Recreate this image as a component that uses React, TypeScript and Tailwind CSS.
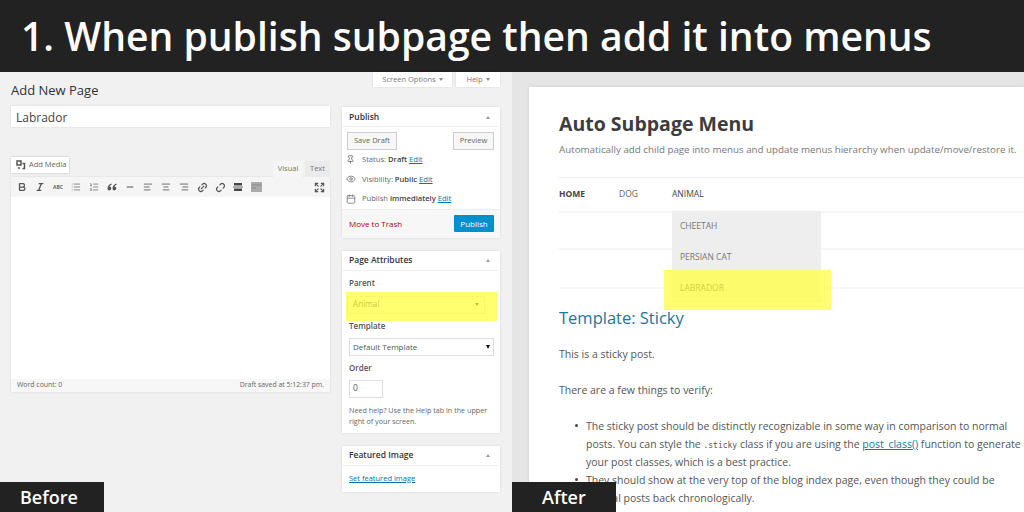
// Before/after promo banner: WordPress editor on the left, resulting site menu on the right.
import { AlignCenter, AlignLeft, AlignRight, Bold, Calendar, Expand, Eye, Italic, Link2, List, ListOrdered, Minus, Pin, Unlink2 } from 'lucide-react';
import type { ReactNode } from 'react';

const SANS = "font-['Open_Sans',sans-serif]";

function MetaBox({ title, children, className }: { title: string; children: ReactNode; className?: string }) {
  return (
    <section className={`w-full bg-white shadow-[0_0_2px_rgba(0,0,0,0.12)] ${className ?? ''}`}>
      <header className="flex h-5 items-center justify-between border-b border-[#f1f1f1] px-[7px] pt-px text-[8.5px] font-semibold text-[#333]">
        <span>{title}</span>
        <span className="mr-[3px] h-0 w-0 border-x-[2.5px] border-b-[3px] border-x-transparent border-b-[#999]" />
      </header>
      {children}
    </section>
  );
}

function StatusRow({ icon, children }: { icon: ReactNode; children: ReactNode }) {
  return (
    <div className="flex h-[19.5px] items-center gap-[5px] text-[7.6px] text-[#666]">
      <span className="flex w-[13px] justify-center text-[#777]">{icon}</span>
      <span>{children}</span>
    </div>
  );
}

function EditLink() {
  return (
    <>
      {' '}
      <span className="text-[#0073aa] underline">Edit</span>
    </>
  );
}

function Slot({ children }: { children: ReactNode }) {
  return <span className="flex w-[18px] justify-center">{children}</span>;
}

function Toolbar() {
  const c = 'text-[#555]';
  return (
    <div className="flex h-5 items-center bg-[#f5f5f5] pl-[2px] pr-[4px]">
      <Slot><Bold size={10} strokeWidth={3} className={c} /></Slot>
      <Slot><Italic size={10} strokeWidth={3} className={c} /></Slot>
      <Slot><span className="text-[5px] font-bold leading-none text-[#666]">ABC</span></Slot>
      <Slot><List size={10} strokeWidth={2} className="text-[#777]" /></Slot>
      <Slot><ListOrdered size={10} strokeWidth={2} className="text-[#777]" /></Slot>
      <Slot>
        <svg width="10" height="8" viewBox="0 0 10 8" className={c}>
          <path d="M4.500 0.500C2 1.500 0.500 3 0.500 5.500a1.900 1.900 0 1 0 2-1.900c.3-1 1-1.700 2.300-2.200zM9.500 0.500C7 1.500 5.500 3 5.500 5.500a1.900 1.900 0 1 0 2-1.900c.3-1 1-1.700 2.300-2.200z" fill="currentColor" />
        </svg>
      </Slot>
      <Slot><Minus size={10} strokeWidth={2.5} className={c} /></Slot>
      <Slot><AlignLeft size={10} strokeWidth={2} className={c} /></Slot>
      <Slot><AlignCenter size={10} strokeWidth={2} className={c} /></Slot>
      <Slot><AlignRight size={10} strokeWidth={2} className={c} /></Slot>
      <Slot><Link2 size={11} strokeWidth={2.5} className={`-rotate-45 ${c}`} /></Slot>
      <Slot><Unlink2 size={11} strokeWidth={2.5} className={`-rotate-45 ${c}`} /></Slot>
      <Slot>
        <svg width="10" height="10" viewBox="0 0 10 10" className="text-[#444]">
          <path d="M1 1h8v2.500H1zM1 6.500h8V9H1z" fill="currentColor" />
          <path d="M0 5h10" stroke="currentColor" strokeWidth="0.8" />
        </svg>
      </Slot>
      <Slot>
        <svg width="11" height="10" viewBox="0 0 11 10">
          <rect width="11" height="10" fill="#aaa" />
          <path d="M1 3h9M1 6h4" stroke="#888" />
        </svg>
      </Slot>
      <Expand size={11} strokeWidth={2.5} className={`ml-auto mr-[1px] ${c}`} />
    </div>
  );
}

function EditorColumn() {
  return (
    <div className="w-[319px]">
      <h1 className="flex h-[34px] items-center pt-[4px] text-[13px] text-[#333]">Add New Page</h1>
      <div className="flex h-[21px] items-center bg-white pl-[5px] pt-[2px] text-[12px] text-[#444] shadow-[0_0_2px_rgba(0,0,0,0.12)]">
        Labrador
      </div>
      <div className="mt-[30px] flex h-5 items-start justify-between">
        <div className="flex h-4 w-[58px] items-center gap-[3px] bg-white pl-[5px] text-[7.5px] text-[#666] shadow-[0_0_2px_rgba(0,0,0,0.25)]">
          <svg width="10" height="10" viewBox="0 0 10 10" className="text-[#555]">
            <path d="M1 1h4v4H1zM6.500 3.500h2v5h-2" fill="none" stroke="currentColor" strokeWidth="1.500" />
            <circle cx="3" cy="8" r="1" fill="currentColor" />
          </svg>
          Add Media
        </div>
        <div className="mt-1 flex h-4 items-center text-[7.5px] text-[#777]">
          <span className="flex h-4 w-[30px] items-center justify-center bg-[#f5f5f5]">Visual</span>
          <span className="ml-[2px] flex h-4 w-[25px] items-center justify-center bg-[#ebebeb]">Text</span>
        </div>
      </div>
      <div className="shadow-[0_0_2px_rgba(0,0,0,0.12)]">
        <Toolbar />
        <div className="h-[182px] bg-white" />
        <div className="flex h-[13px] items-center justify-between bg-[#f7f7f7] px-[6px] text-[6.9px] text-[#666]">
          <span>Word count: 0</span>
          <span>Draft saved at 5:12:37 pm.</span>
        </div>
      </div>
    </div>
  );
}

function SideColumn() {
  return (
    <div className="flex w-[158px] flex-col">
      <div className="flex h-[15px] justify-end gap-1">
        <div className="flex w-[79px] items-center justify-center gap-[3px] bg-white text-[7.5px] text-[#777] shadow-[0_0_2px_rgba(0,0,0,0.12)]">
          Screen Options
          <span className="h-0 w-0 border-x-[2px] border-t-[3px] border-x-transparent border-t-[#888]" />
        </div>
        <div className="flex w-[44px] items-center justify-center gap-[3px] bg-white text-[7.5px] text-[#777] shadow-[0_0_2px_rgba(0,0,0,0.12)]">
          Help
          <span className="h-0 w-0 border-x-[2px] border-t-[3px] border-x-transparent border-t-[#888]" />
        </div>
      </div>

      <MetaBox title="Publish" className="mt-5">
        <div className="flex justify-between px-[6px] pt-[6px]">
          <span className="flex h-4 w-12 items-center justify-center bg-[#f7f7f7] text-[7.5px] text-[#666] shadow-[0_0_0_1px_#ccc]">Save Draft</span>
          <span className="mr-[1px] flex h-4 w-[39px] items-center justify-center bg-[#f7f7f7] text-[7.5px] text-[#666] shadow-[0_0_0_1px_#ccc]">Preview</span>
        </div>
        <div className="px-[2px] pt-[1px]">
          <StatusRow icon={<Pin size={9} strokeWidth={2.5} />}>
            Status: <b className="font-semibold text-[#444]">Draft</b>
            <EditLink />
          </StatusRow>
          <StatusRow icon={<Eye size={10} strokeWidth={2} />}>
            Visibility: <b className="font-semibold text-[#444]">Public</b>
            <EditLink />
          </StatusRow>
          <StatusRow icon={<Calendar size={10} strokeWidth={2} />}>
            Publish <b className="font-semibold text-[#444]">immediately</b>
            <EditLink />
          </StatusRow>
        </div>
        <div className="flex h-[29px] items-center justify-between border-t border-[#eee] bg-[#f7f7f7] pl-[7px] pr-[6px]">
          <span className="text-[8px] text-[#a00]">Move to Trash</span>
          <span className="flex h-[17px] w-10 items-center justify-center rounded-[1px] bg-[#0091cd] text-[8px] text-white">Publish</span>
        </div>
      </MetaBox>

      <MetaBox title="Page Attributes" className="mt-[13px]">
        <div className="px-[7px] text-[8px]">
          <p className="pt-[6px] font-semibold leading-[12px] text-[#555]">Parent</p>
          <div className="-ml-[1px] mt-[8px] flex h-4 w-[136px] items-center justify-between bg-white pl-[5px] pr-[5px] text-[8.2px] text-[#222] shadow-[0_0_0_1px_#ddd]">
            Animal
            <span className="h-0 w-0 border-x-[2px] border-t-[3px] border-x-transparent border-t-black" />
          </div>
          <p className="mt-[7px] font-semibold leading-[12px] text-[#555]">Template</p>
          <div className="ml-[1px] mt-[7px] flex h-4 w-[143px] items-center justify-between bg-white pl-[3px] pr-[3px] text-[8px] text-[#555] shadow-[0_0_0_1px_#ddd]">
            Default Template
            <span className="h-0 w-0 border-x-[2.5px] border-t-[4px] border-x-transparent border-t-[#111]" />
          </div>
          <p className="mt-[7px] font-semibold leading-[12px] text-[#555]">Order</p>
          <div className="ml-[1px] mt-[7px] flex h-4 w-8 items-center bg-white pl-[3px] text-[8.5px] text-[#555] shadow-[0_0_0_1px_#ddd]">0</div>
          <p className="whitespace-nowrap pb-[6px] pt-[8px] text-[7.2px] leading-[11px] text-[#666]">
            Need help? Use the Help tab in the upper
            <br />
            right of your screen.
          </p>
        </div>
      </MetaBox>

      <MetaBox title="Featured Image" className="mt-[13px]">
        <p className="h-[26px] px-[7px] pt-[7px] text-[7.5px] text-[#0073aa] underline">Set featured image</p>
      </MetaBox>
    </div>
  );
}

function BlogPanel() {
  return (
    <div className="min-w-0 flex-1 bg-[#e5e5e5] pl-[17px] pt-[15px]">
      <div className="h-[425px] overflow-hidden bg-white pl-[30px] text-[10.5px] text-[#555] shadow-[0_0_3px_rgba(0,0,0,0.12)]">
        <h2 className="mt-[23px] text-[19.5px] font-bold leading-[27px] text-[#3d3d3d]">Auto Subpage Menu</h2>
        <p className="mt-[6px] whitespace-nowrap text-[9.78px] leading-[14px] text-[#777]">
          Automatically add child page into menus and update menus hierarchy when update/move/restore it.
        </p>
        <nav className="relative mt-[20px] flex h-[34px] items-center border-t border-[#ededed] text-[8.5px] text-[#666]">
          <span className="w-[60px] font-bold text-[#444]">HOME</span>
          <span className="w-[53px]">DOG</span>
          <span className="text-[#444]">ANIMAL</span>
        </nav>
        <div className="relative h-[92px]">
          <div className="h-[37px] border-t-2 border-[#f5f5f5]" />
          <div className="h-[39px] border-t-2 border-[#f5f5f5]" />
          <div className="border-t-2 border-[#f5f5f5]" />
          <ul className="absolute left-[113px] top-0 w-[149px] bg-[#eee] text-[8.5px] text-[#777]">
            <li className="flex h-[31px] items-center pl-2">CHEETAH</li>
            <li className="flex h-[31px] items-center pl-2">PERSIAN CAT</li>
            <li className="flex h-[30px] items-center pl-2 text-[#444]">LABRADOR</li>
          </ul>
        </div>
        <h3 className="mt-[3px] text-[16.5px] leading-[24px] text-[#21759b]">Template: Sticky</h3>
        <p className="mt-[15px] leading-[18px]">This is a sticky post.</p>
        <p className="mt-[18px] leading-[18px]">There are a few things to verify:</p>
        <ul className="mt-[18px] whitespace-nowrap pl-[27px] leading-[18px]">
          <li className="relative">
            <span className="absolute -left-[11px] top-[7px] h-[3px] w-[3px] rounded-full bg-[#444]" />
            The sticky post should be distinctly recognizable in some way in comparison to normal
            <br />
            posts. You can style the <code className="font-['DejaVu_Sans_Mono',monospace] text-[8px] leading-none">.sticky</code> class if you are using the{' '}
            <span className="text-[#21759b] underline">post_class()</span> function to generate
            <br />
            your post classes, which is a best practice.
          </li>
          <li className="relative">
            <span className="absolute -left-[11px] top-[7px] h-[3px] w-[3px] rounded-full bg-[#444]" />
            They should show at the very top of the blog index page, even though they could be
            <br />
            several posts back chronologically.
          </li>
        </ul>
      </div>
    </div>
  );
}

export default function App() {
  return (
    <div className={`relative h-[512px] w-[1024px] overflow-hidden bg-[#f1f1f1] ${SANS}`}>
      <div className="flex h-[72px] items-center whitespace-nowrap bg-[#222] pl-[21px] text-[39.1px] font-semibold text-white">
        1. When publish subpage then add it into menus
      </div>
      <div className="flex h-[440px]">
        <div className="flex w-[512px] gap-3 pl-[11px]">
          <EditorColumn />
          <SideColumn />
        </div>
        <BlogPanel />
      </div>

      {/* highlights and corner labels sit on top of the screenshots */}
      <div className="absolute left-[346px] top-[292px] h-[29px] w-[151px] bg-[#ffff40]/75" />
      <div className="absolute left-[664px] top-[270px] h-10 w-[167px] bg-[#ffff40]/75" />
      <div className="absolute bottom-0 left-0 flex h-[30px] w-[104px] items-center bg-[#222] pl-5 text-[18px] font-semibold text-white">Before</div>
      <div className="absolute bottom-0 left-[512px] flex h-[30px] w-[104px] items-center bg-[#222] pl-[30px] text-[18px] font-semibold text-white">After</div>
    </div>
  );
}
